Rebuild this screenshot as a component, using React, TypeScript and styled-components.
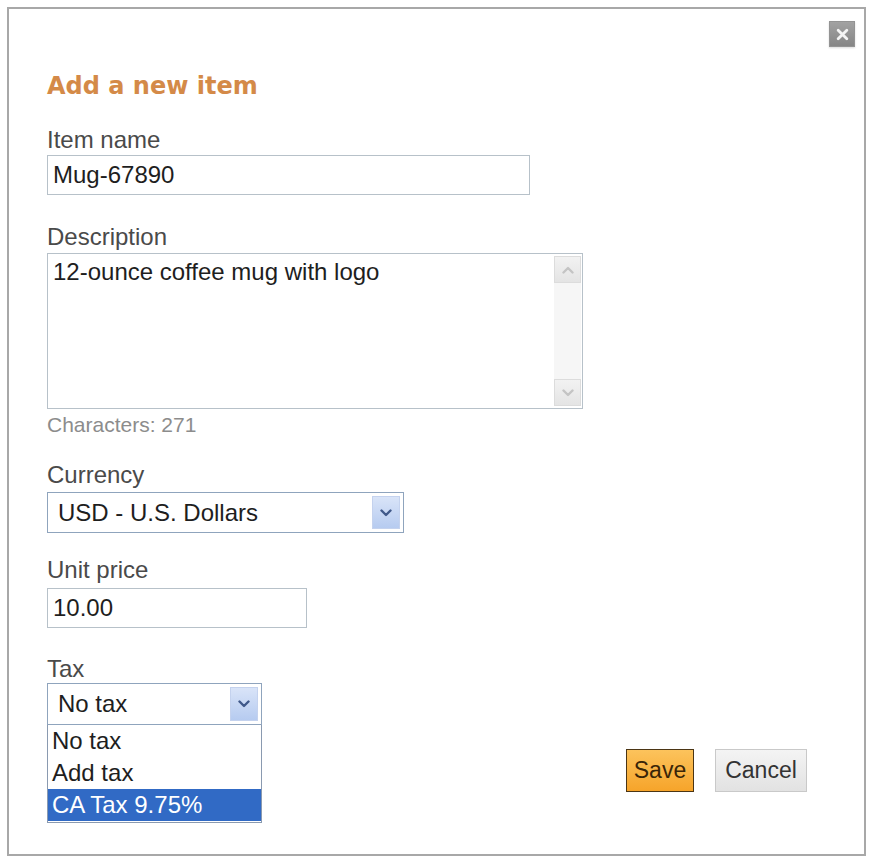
import React from 'react';
import styled, { createGlobalStyle } from 'styled-components';

const GlobalStyle = createGlobalStyle`
    html, body {
        margin: 0;
        background: #ffffff;
    }
    body {
        font-family: 'Liberation Sans', Arial, sans-serif;
        color: #333;
    }
`;

const Page = styled.div`
    padding: 7px;
`;

const Dialog = styled.div`
    position: relative;
    width: 859px;
    box-sizing: border-box;
    border: 2px solid #a8a8a8;
    padding: 63px 57px 31px 38px;
    background: #fff;
`;

const CloseButton = styled.div`
    position: absolute;
    top: 12px;
    right: 9px;
    width: 26px;
    height: 26px;
    box-sizing: border-box;
    display: flex;
    align-items: center;
    justify-content: center;
    background: linear-gradient(#a2a2a2, #858585);
    border: 1px solid #939393;
    box-shadow: 0 1px 2px rgba(0, 0, 0, 0.15);
`;

const Title = styled.h2`
    margin: 0 0 25px;
    font-family: 'DejaVu Sans', Verdana, sans-serif;
    font-weight: bold;
    font-size: 24px;
    line-height: 29px;
    color: #d48a48;
`;

const Field = styled.div<{ $top?: number }>`
    margin-top: ${p => p.$top ?? 0}px;
`;

const Label = styled.div<{ $gap?: number }>`
    font-size: 24px;
    line-height: 28px;
    color: #4a4a4a;
    margin-bottom: ${p => p.$gap ?? 1}px;
`;

const TextInput = styled.div<{ $width: number }>`
    width: ${p => p.$width}px;
    height: 40px;
    box-sizing: border-box;
    border: 1px solid #b7c1c9;
    padding: 0 5px;
    display: flex;
    align-items: center;
    font-size: 24px;
    color: #1e1e1e;
`;

const TextArea = styled.div`
    width: 536px;
    height: 156px;
    box-sizing: border-box;
    border: 1px solid #b7c1c9;
    display: flex;
`;

const TextAreaBody = styled.div`
    flex: 1;
    padding: 4px 5px;
    font-size: 24px;
    line-height: 28px;
    color: #1e1e1e;
`;

const ScrollTrack = styled.div`
    width: 27px;
    margin: 2px 1px 2px 0;
    background: #f6f6f6;
    display: flex;
    flex-direction: column;
    justify-content: space-between;
`;

const ScrollButton = styled.div`
    height: 27px;
    display: flex;
    align-items: center;
    justify-content: center;
    background: linear-gradient(#f2f2f2, #e4e4e4);
    border: 1px solid #dcdcdc;
    box-sizing: border-box;
`;

const Counter = styled.div`
    margin-top: 4px;
    font-size: 21px;
    line-height: 24px;
    color: #8c8c8c;
`;

const Select = styled.div<{ $width: number; $height: number }>`
    width: ${p => p.$width}px;
    height: ${p => p.$height}px;
    box-sizing: border-box;
    border: 1px solid #8fa4bd;
    padding: 3px 3px 3px 10px;
    display: flex;
    align-items: center;
    justify-content: space-between;
    font-size: 24px;
    color: #1e1e1e;
    background: #fff;
`;

const SelectArrow = styled.div`
    width: 28px;
    align-self: stretch;
    display: flex;
    align-items: center;
    justify-content: center;
    background: linear-gradient(#d9e4f8, #b6cbf0);
    border: 1px solid #c4d2ee;
    box-sizing: border-box;
`;

const BottomRow = styled.div`
    display: flex;
    justify-content: space-between;
    align-items: flex-end;
`;

const OptionList = styled.div`
    width: 215px;
    box-sizing: border-box;
    border: 1px solid #8a9ab0;
    border-top: none;
    background: #fff;
    padding-bottom: 1px;
`;

const Option = styled.div<{ $selected?: boolean }>`
    height: 32px;
    line-height: 32px;
    padding: 0 4px;
    font-size: 24px;
    color: ${p => (p.$selected ? '#ffffff' : '#1e1e1e')};
    background: ${p => (p.$selected ? '#316ac5' : 'transparent')};
`;

const Actions = styled.div`
    display: flex;
    gap: 21px;
    margin-bottom: 31px;
`;

const Button = styled.button<{ $primary?: boolean; $width: number }>`
    width: ${p => p.$width}px;
    height: 43px;
    padding: 0;
    font-family: 'Liberation Sans', Arial, sans-serif;
    font-size: 23px;
    cursor: pointer;
    color: ${p => (p.$primary ? '#3a2508' : '#333')};
    border: 1px solid ${p => (p.$primary ? '#4b3514' : '#c9c9c9')};
    background: ${p =>
        p.$primary ? 'linear-gradient(#fcc35c, #f6a42a)' : 'linear-gradient(#f4f4f4, #e2e2e2)'};
`;

const Chevron = ({ color, up }: { color: string; up?: boolean }) => (
    <svg width="12" height="8" viewBox="0 0 12 8">
        <path
            d={up ? 'M1.5 6.5 L6 2 L10.5 6.5' : 'M1.5 1.5 L6 6 L10.5 1.5'}
            fill="none"
            stroke={color}
            strokeWidth="2.4"
            strokeLinecap="round"
            strokeLinejoin="round"
        />
    </svg>
);

const CloseIcon = () => (
    <svg width="13" height="13" viewBox="0 0 12 12">
        <path d="M2 2 L10 10 M10 2 L2 10" stroke="#f4f4f4" strokeWidth="2.6" strokeLinecap="round" />
    </svg>
);

const taxOptions = ['No tax', 'Add tax', 'CA Tax 9.75%'];

const App = () => (
    <Page>
        <GlobalStyle />
        <Dialog>
            <CloseButton>
                <CloseIcon />
            </CloseButton>
            <Title>Add a new item</Title>

            <Field>
                <Label>Item name</Label>
                <TextInput $width={483}>Mug-67890</TextInput>
            </Field>

            <Field $top={28}>
                <Label $gap={2}>Description</Label>
                <TextArea>
                    <TextAreaBody>12-ounce coffee mug with logo</TextAreaBody>
                    <ScrollTrack>
                        <ScrollButton>
                            <Chevron color="#c4c4c4" up />
                        </ScrollButton>
                        <ScrollButton>
                            <Chevron color="#c4c4c4" />
                        </ScrollButton>
                    </ScrollTrack>
                </TextArea>
                <Counter>Characters: 271</Counter>
            </Field>

            <Field $top={24}>
                <Label $gap={3}>Currency</Label>
                <Select $width={357} $height={41}>
                    <span>USD - U.S. Dollars</span>
                    <SelectArrow>
                        <Chevron color="#40598a" />
                    </SelectArrow>
                </Select>
            </Field>

            <Field $top={23}>
                <Label $gap={4}>Unit price</Label>
                <TextInput $width={260}>10.00</TextInput>
            </Field>

            <BottomRow>
                <Field $top={27}>
                    <Label $gap={0}>Tax</Label>
                    <Select $width={215} $height={42}>
                        <span>No tax</span>
                        <SelectArrow>
                            <Chevron color="#40598a" />
                        </SelectArrow>
                    </Select>
                    <OptionList>
                        {taxOptions.map((option, i) => (
                            <Option key={option} $selected={i === taxOptions.length - 1}>
                                {option}
                            </Option>
                        ))}
                    </OptionList>
                </Field>
                <Actions>
                    <Button $primary $width={68}>
                        Save
                    </Button>
                    <Button $width={92}>Cancel</Button>
                </Actions>
            </BottomRow>
        </Dialog>
    </Page>
);

export default App;
